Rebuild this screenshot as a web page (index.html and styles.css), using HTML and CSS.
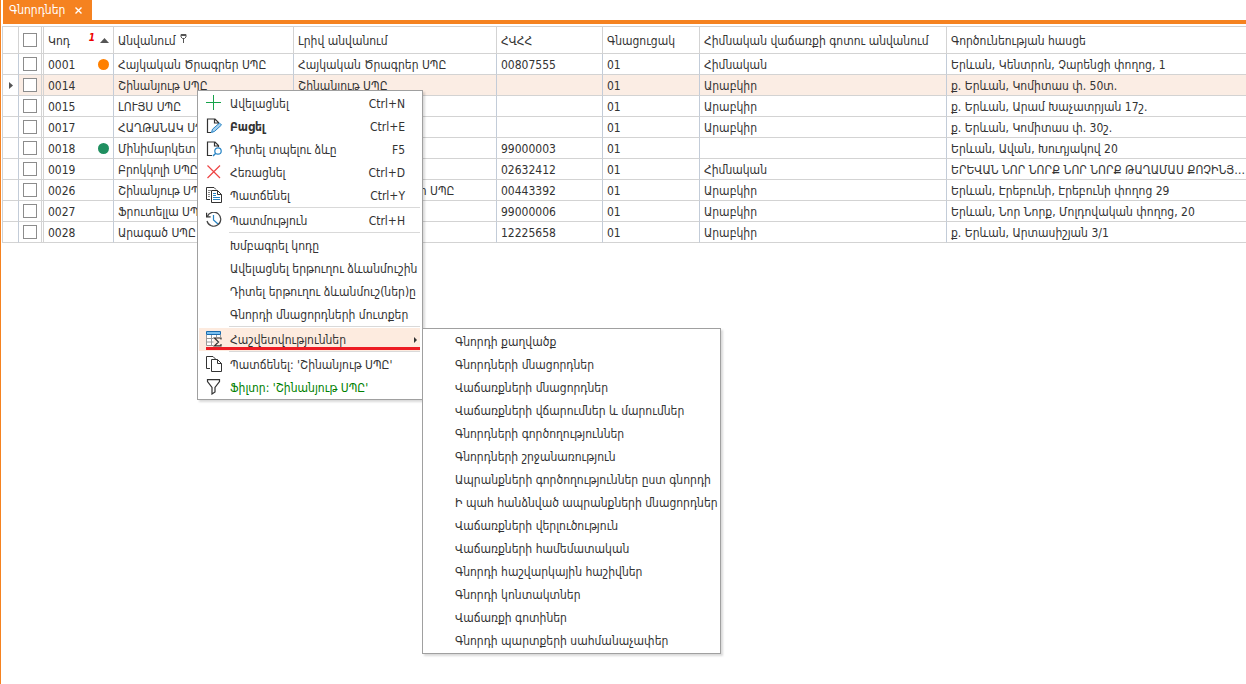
FILE: index.html
```html
<!DOCTYPE html>
<html lang="hy">
<head>
<meta charset="utf-8">
<title>Գնորդներ</title>
<link rel="stylesheet" href="styles.css">
</head>
<body>
<div class="window">
  <nav class="tabs">
    <div class="tab">
      <a class="tab-label" href="#grid">Գնորդներ</a>
      <button class="tab-close" type="button" aria-label="Փակել">
        <svg width="7" height="7" viewBox="0 0 7 7"><path d="M.5 .5l6 6M6.5 .5l-6 6" stroke="#fff" stroke-width="1.4"/></svg>
      </button>
    </div>
  </nav>

  <table class="grid" id="grid">
    <colgroup>
      <col class="c-mark"><col class="c-check"><col class="c-code"><col class="c-name"><col class="c-full"><col class="c-tax"><col class="c-price"><col class="c-zone"><col>
    </colgroup>
    <thead>
      <tr>
        <th></th>
        <th class="check"><input type="checkbox" aria-label="Բոլորը"></th>
        <th><div class="code"><span>Կոդ</span><span class="sort"><b>1</b><svg width="9" height="5" viewBox="0 0 9 5"><path d="M0 5L4.500 0L9 5z" fill="#555"/></svg></span></div></th>
        <th><div class="head-filter">Անվանում<svg width="7" height="9" viewBox="0 0 7 9"><path d="M1 .5h5v2.500L4.500 4.500h-2L1 3zM3.500 4.500V9M1 1.500h5" fill="none" stroke="#555"/></svg></div></th>
        <th>Լրիվ անվանում</th>
        <th>ՀՎՀՀ</th>
        <th>Գնացուցակ</th>
        <th>Հիմնական վաճառքի գոտու անվանում</th>
        <th>Գործունեության հասցե</th>
      </tr>
    </thead>
    <tbody>
      <tr><td></td><td class="check"><input type="checkbox" aria-label="0001"></td><td><div class="code">0001<i class="dot orange"></i></div></td><td>Հայկական Ծրագրեր ՍՊԸ</td><td>Հայկական Ծրագրեր ՍՊԸ</td><td>00807555</td><td>01</td><td>Հիմնական</td><td>Երևան, Կենտրոն, Չարենցի փողոց, 1</td></tr>
      <tr class="current"><td class="mark"><svg width="4" height="7" viewBox="0 0 4 7"><path d="M0 0l4 3.500L0 7z" fill="#555"/></svg></td><td class="check"><input type="checkbox" aria-label="0014"></td><td>0014</td><td>Շինանյութ ՍՊԸ</td><td>Շինանյութ ՍՊԸ</td><td></td><td>01</td><td>Արաբկիր</td><td>ք. Երևան, Կոմիտաս փ. 50տ.</td></tr>
      <tr><td></td><td class="check"><input type="checkbox" aria-label="0015"></td><td>0015</td><td>ԼՈՒՅՍ ՍՊԸ</td><td></td><td></td><td>01</td><td>Արաբկիր</td><td>ք. Երևան, Արամ Խաչատրյան 17շ.</td></tr>
      <tr><td></td><td class="check"><input type="checkbox" aria-label="0017"></td><td>0017</td><td>ՀԱՂԹԱՆԱԿ ՍՊԸ</td><td></td><td></td><td>01</td><td>Արաբկիր</td><td>ք. Երևան, Կոմիտաս փ. 30շ.</td></tr>
      <tr><td></td><td class="check"><input type="checkbox" aria-label="0018"></td><td><div class="code">0018<i class="dot green"></i></div></td><td>Մինիմարկետ</td><td></td><td>99000003</td><td>01</td><td></td><td>Երևան, Ավան, Խուդյակով 20</td></tr>
      <tr><td></td><td class="check"><input type="checkbox" aria-label="0019"></td><td>0019</td><td>Բրոկկոլի ՍՊԸ</td><td></td><td>02632412</td><td>01</td><td>Հիմնական</td><td>ԵՐԵՎԱՆ ՆՈՐ ՆՈՐՔ ՆՈՐ ՆՈՐՔ ԹԱՂԱՄԱՍ ՔՈՉԻՆՅԱՆ ՓՈՂՈՑ</td></tr>
      <tr><td></td><td class="check"><input type="checkbox" aria-label="0026"></td><td>0026</td><td>Շինանյութ ՍՊԸ</td><td>Շինանյութերի նյութեր ՍՊԸ</td><td>00443392</td><td>01</td><td>Արաբկիր</td><td>Երևան, Էրեբունի, Էրեբունի փողոց 29</td></tr>
      <tr><td></td><td class="check"><input type="checkbox" aria-label="0027"></td><td>0027</td><td>Ֆրուտելլա ՍՊԸ</td><td></td><td>99000006</td><td>01</td><td>Արաբկիր</td><td>Երևան, Նոր Նորք, Մոլդովական փողոց, 20</td></tr>
      <tr><td></td><td class="check"><input type="checkbox" aria-label="0028"></td><td>0028</td><td>Արագած ՍՊԸ</td><td></td><td>12225658</td><td>01</td><td>Արաբկիր</td><td>ք. Երևան, Արտասիշյան 3/1</td></tr>
    </tbody>
  </table>
</div>

<div class="menu context" role="menu">
  <button type="button" class="item"><svg class="icon" viewBox="0 0 16 16"><path d="M7.500 0v15M0 7.500h15" stroke="#16a34a"/></svg><span>Ավելացնել</span><kbd>Ctrl+N</kbd></button>
  <button type="button" class="item default"><svg class="icon" viewBox="0 0 16 16"><path d="M12.500 6V4.500L9 1H1.500v13.500H5M8.500 1v4H12" fill="none" stroke="#333" stroke-width="1.200"/><path d="M5.500 14.500l1-3.300L13.500 5l2 2L8.500 13.400z" fill="#a9d0ee" stroke="#2583c4"/></svg><span>Բացել</span><kbd>Ctrl+E</kbd></button>
  <button type="button" class="item"><svg class="icon" viewBox="0 0 16 16"><path d="M12.500 6V4.500L9 1H1.500v13.500H6M8.500 1v4H12.500" fill="none" stroke="#333" stroke-width="1.200"/><circle cx="12" cy="10" r="3.200" fill="#fff" stroke="#2583c4" stroke-width="1.200"/><path d="M9.800 12.200L7 15" stroke="#2583c4" stroke-width="1.400"/></svg><span>Դիտել տպելու ձևը</span><kbd>F5</kbd></button>
  <button type="button" class="item"><svg class="icon" viewBox="0 0 16 16"><path d="M1.500 1.500l12.500 12.500M14 1.500L1.500 14" stroke="#ee4444" stroke-width="1.200"/></svg><span>Հեռացնել</span><kbd>Ctrl+D</kbd></button>
  <button type="button" class="item"><svg class="icon" viewBox="0 0 16 16"><path d="M4 12.500H.5V.5H8l2 2" fill="none" stroke="#333"/><path d="M2 3.500H5M2 5.500H4M2 7.500H4M2 9.500H4" stroke="#888"/><path d="M5.500 3.500h6l4 4v8h-10zM11.500 3.500v4h4" fill="#fff" stroke="#333"/><path d="M7 6.500h3M7 8.500h3M7 10.500h7M7 12.500h7" stroke="#2583c4"/></svg><span>Պատճենել</span><kbd>Ctrl+Y</kbd></button>
  <hr>
  <button type="button" class="item"><svg class="icon" viewBox="0 0 16 16"><path d="M1.300 4.500A7 7 0 1 1 1 9" fill="none" stroke="#444" stroke-width="1.200"/><path d="M.6 .8v4h4" fill="none" stroke="#333" stroke-width="1.200"/><path d="M7.500 3v5l4.500 4" fill="none" stroke="#2583c4" stroke-width="1.200"/></svg><span>Պատմություն</span><kbd>Ctrl+H</kbd></button>
  <hr>
  <button type="button" class="item"><i class="icon"></i><span>Խմբագրել կոդը</span></button>
  <button type="button" class="item"><i class="icon"></i><span>Ավելացնել երթուղու ձևանմուշին</span></button>
  <button type="button" class="item"><i class="icon"></i><span>Դիտել երթուղու ձևանմուշ(ներ)ը</span></button>
  <button type="button" class="item"><i class="icon"></i><span>Գնորդի մնացորդների մուտքեր</span></button>
  <hr>
  <button type="button" class="item open"><svg class="icon" viewBox="0 0 16 16"><path d="M.5 4v10.500H14.500V4z" fill="#fff"/><path d="M.5 4v10.500H8M5.500 4v10.500M10.500 4v3M14.500 4v3M1 7.500h7M1 11h7" fill="none" stroke="#999"/><path d="M.5 .5h14v3H.5z" fill="#7cc0ee" stroke="#1a6cb0"/><path d="M7.500 6H16v10H7.500z" fill="#fdebdf"/><path d="M15 8.500V7H8.500l4 4-4 3.800H15V13" fill="none" stroke="#333" stroke-width="1.200"/></svg><span>Հաշվետվություններ</span><svg class="arrow" width="3" height="6" viewBox="0 0 3 6"><path d="M0 0l3 3-3 3z" fill="#333"/></svg></button>
  <hr>
  <button type="button" class="item"><svg class="icon" viewBox="0 0 16 16"><path d="M4 12.500H.5V.5H7l2.500 2.500" fill="none" stroke="#333"/><path d="M5.500 3.500h6l4 4v8h-10zM11.500 3.500v4h4" fill="#fff" stroke="#333"/></svg><span>Պատճենել: 'Շինանյութ ՍՊԸ'</span></button>
  <button type="button" class="item filter"><svg class="icon" viewBox="0 0 16 16"><path d="M1.500 .6h12v2L9 8.500v4.500l-3 2V8.500L1.500 2.600z" fill="none" stroke="#333" stroke-width="1.200"/></svg><span>Ֆիլտր: 'Շինանյութ ՍՊԸ'</span></button>
</div>

<div class="menu reports" role="menu">
  <button type="button" class="item">Գնորդի քաղվածք</button>
  <button type="button" class="item">Գնորդների մնացորդներ</button>
  <button type="button" class="item">Վաճառքների մնացորդներ</button>
  <button type="button" class="item">Վաճառքների վճարումներ և մարումներ</button>
  <button type="button" class="item">Գնորդների գործողություններ</button>
  <button type="button" class="item">Գնորդների շրջանառություն</button>
  <button type="button" class="item">Ապրանքների գործողություններ ըստ գնորդի</button>
  <button type="button" class="item">Ի պահ հանձնված ապրանքների մնացորդներ</button>
  <button type="button" class="item">Վաճառքների վերլուծություն</button>
  <button type="button" class="item">Վաճառքների համեմատական</button>
  <button type="button" class="item">Գնորդի հաշվարկային հաշիվներ</button>
  <button type="button" class="item">Գնորդի կոնտակտներ</button>
  <button type="button" class="item">Վաճառքի գոտիներ</button>
  <button type="button" class="item">Գնորդի պարտքերի սահմանաչափեր</button>
</div>
</body>
</html>
```

FILE: styles.css
```css
* { box-sizing: border-box; }
body, button, table {
  font: 12px/16px Tahoma, "DejaVu Sans Condensed", "DejaVu Sans", sans-serif;
  color: #333;
}
body { margin: 0; background: #fff; overflow: hidden; }
button { border: 0; padding: 0; background: none; }

.window { min-height: 100vh; border-left: 1px solid #f58220; padding-left: 1px; }
.tabs { display: flex; margin-left: 1px; border-bottom: 4px solid #f58220; }
.tab { display: flex; align-items: center; gap: 10px; height: 20px; padding: 0 10px 0 6px; background: #f58220; }
.tab-label { color: #fff; text-decoration: none; }
.tab-close { display: flex; }

.grid { width: 100%; margin-top: 2px; table-layout: fixed; border-collapse: separate; border-spacing: 0; border-top: 1px solid #d3d3d3; border-left: 1px solid #d3d3d3; }
.c-mark { width: 16px; }
.c-check { width: 25px; }
.c-code { width: 70px; }
.c-name { width: 180px; }
.c-full { width: 203px; }
.c-tax { width: 106px; }
.c-price { width: 97px; }
.c-zone { width: 247px; }
.grid th, .grid td {
  height: 21px; padding: 1px 0 0 4px; text-align: left; font-weight: normal;
  border-right: 1px solid #c3ccd8; border-bottom: 1px solid #d3d3d3;
  white-space: nowrap; overflow: hidden; text-overflow: ellipsis;
}
.grid th { height: 27px; border-right-color: #d3d3d3; }
.grid th:last-child, .grid td:last-child { border-right: 0; }
.grid .check { padding-top: 0; border-right: 3px double #d3d3d3; }
.grid .check input {
  appearance: none; display: block; width: 14px; height: 14px; margin: 0;
  border: 1px solid #8c8c8c; background: #fff;
}
.grid .mark { padding: 0 0 0 6px; background: #fff; }
.mark svg { display: block; }
.current { background: #fbede4; }
.code { display: flex; justify-content: space-between; align-items: center; padding-right: 4px; }
.sort { display: flex; align-items: center; gap: 5px; }
.sort b { color: #e00; font-size: 10px; line-height: 12px; font-style: italic; padding-bottom: 6px; }
.dot { width: 11px; height: 11px; border-radius: 50%; }
.orange { background: #ff8000; }
.green { background: #1f8f60; }
.head-filter { display: flex; align-items: center; gap: 4px; }
.head-filter svg { margin-bottom: 5px; }

.menu {
  position: absolute; display: flex; flex-direction: column;
  border: 1px solid #a0a0a0; background: #fff; box-shadow: 2px 2px 2px #00000026;
}
.context { left: 197px; top: 90px; width: 226px; padding: 1px 2px 0 1px; }
.reports { left: 422px; top: 328px; width: 299px; padding: 1px 0; }
.menu hr { height: 1px; width: 191px; margin: 0 0 1px auto; border: 0; background: #d9d9d9; }
.item { position: relative; display: flex; align-items: center; height: 23px; text-align: left; white-space: nowrap; }
.context .item { gap: 8px; padding: 0 15px 0 7px; }
.reports .item { padding-left: 32px; }
.icon { width: 16px; height: 16px; flex: none; margin-bottom: 1px; }
.item kbd { margin-left: auto; font: inherit; font-weight: normal; }
.default span { font-weight: bold; }
.filter { color: #008000; }
.open { background: #fdebdf; }
.context .open { padding-right: 3px; }
.arrow { margin-left: auto; }
.open::after { content: ""; position: absolute; left: 7px; right: 0; bottom: 1px; height: 3px; background: #ed1c24; }
```
